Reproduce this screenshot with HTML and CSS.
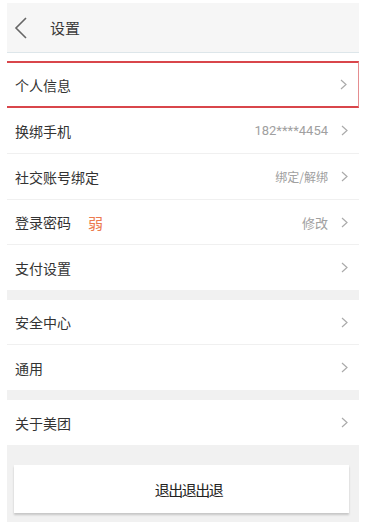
FILE: index.html
```html
<!DOCTYPE html>
<html lang="zh">
<head>
<meta charset="utf-8">
<link rel="stylesheet" href="styles.css">
</head>
<body>
<div class="page">
  <header class="topbar">
    <svg class="back" width="14" height="22" viewBox="0 0 14 22"><path d="M12 1 L2 11 L12 21" fill="none" stroke="#666" stroke-width="1.6"/></svg>
    <span class="title">设置</span>
  </header>
  <div class="gap-white"></div>
  <div class="row first">
    <span class="label">个人信息</span>
    <svg class="chev" width="7" height="11" viewBox="0 0 7 11"><path d="M1 1 L6 5.5 L1 10" fill="none" stroke="#aaa" stroke-width="1.2"/></svg>
  </div>
  <div class="row">
    <span class="label">换绑手机</span>
    <span class="value num">182****4454</span>
    <svg class="chev" width="7" height="11" viewBox="0 0 7 11"><path d="M1 1 L6 5.5 L1 10" fill="none" stroke="#aaa" stroke-width="1.2"/></svg>
  </div>
  <div class="row">
    <span class="label">社交账号绑定</span>
    <span class="value small">绑定/解绑</span>
    <svg class="chev" width="7" height="11" viewBox="0 0 7 11"><path d="M1 1 L6 5.5 L1 10" fill="none" stroke="#aaa" stroke-width="1.2"/></svg>
  </div>
  <div class="row short">
    <span class="label">登录密码</span><span class="weak">弱</span>
    <span class="value">修改</span>
    <svg class="chev" width="7" height="11" viewBox="0 0 7 11"><path d="M1 1 L6 5.5 L1 10" fill="none" stroke="#aaa" stroke-width="1.2"/></svg>
  </div>
  <div class="row last">
    <span class="label">支付设置</span>
    <svg class="chev" width="7" height="11" viewBox="0 0 7 11"><path d="M1 1 L6 5.5 L1 10" fill="none" stroke="#aaa" stroke-width="1.2"/></svg>
  </div>
  <div class="band"></div>
  <div class="row short">
    <span class="label">安全中心</span>
    <svg class="chev" width="7" height="11" viewBox="0 0 7 11"><path d="M1 1 L6 5.5 L1 10" fill="none" stroke="#aaa" stroke-width="1.2"/></svg>
  </div>
  <div class="row last">
    <span class="label">通用</span>
    <svg class="chev" width="7" height="11" viewBox="0 0 7 11"><path d="M1 1 L6 5.5 L1 10" fill="none" stroke="#aaa" stroke-width="1.2"/></svg>
  </div>
  <div class="band"></div>
  <div class="row last">
    <span class="label">关于美团</span>
    <svg class="chev" width="7" height="11" viewBox="0 0 7 11"><path d="M1 1 L6 5.5 L1 10" fill="none" stroke="#aaa" stroke-width="1.2"/></svg>
  </div>
  <div class="footer">
    <div class="logout">退出退出退</div>
  </div>
</div>
</body>
</html>
```
FILE: styles.css
```css
* { box-sizing: border-box; }
html, body { height: 100%; }
body {
  margin: 0;
  padding: 3px 6px 0 7px;
  background: #fff;
  font-family: "Noto Sans CJK SC", "Noto Sans", sans-serif;
  color: #333;
}
.page {
  display: flex;
  flex-direction: column;
  height: 519px;
  overflow: hidden;
}
.topbar {
  height: 50px;
  background: #f6f6f6;
  border-bottom: 1px solid #dde6ea;
  display: flex;
  align-items: center;
  padding-left: 7px;
  flex-shrink: 0;
}
.back { margin-top: 1px; }
.title {
  margin-left: 22px;
  font-size: 15px;
  color: #3a3a3a;
}
.gap-white { height: 8px; flex-shrink: 0; }
.row {
  height: 46px;
  display: flex;
  align-items: center;
  padding: 0 11px 0 8px;
  border-bottom: 1px solid #f0f0f0;
  background: #fff;
  flex-shrink: 0;
}
.row.short { height: 45px; }
.row.last { border-bottom: none; height: 45px; }
.row.first {
  height: 47px;
  border-top: 2px solid #d9464b;
  border-bottom: 2px solid #d9464b;
  border-right: 1px solid #e58d90;
}
.label {
  font-size: 14px;
  color: #333;
}
.weak {
  margin-left: 17px;
  font-size: 15px;
  color: #ec7a4e;
}
.value {
  margin-left: auto;
  margin-right: 13px;
  font-size: 13px;
  color: #a0a0a0;
}
.value.small { font-size: 12px; }
.value.num { font-family: "Roboto", "Noto Sans", sans-serif; font-size: 13px; }
.chev { margin-left: auto; flex-shrink: 0; }
.value + .chev { margin-left: 0; }
.band {
  height: 10px;
  background: #f1f1f1;
  flex-shrink: 0;
}
.footer {
  flex: 1;
  background: #f1f1f1;
  padding: 20px 10px 0 7px;
}
.logout {
  height: 48px;
  background: #fff;
  box-shadow: 0 2px 2px rgba(0,0,0,0.18);
  display: flex;
  align-items: center;
  justify-content: center;
  font-size: 15px;
  color: #222;
  letter-spacing: -1.5px;
  padding-left: 14px;
}
```
